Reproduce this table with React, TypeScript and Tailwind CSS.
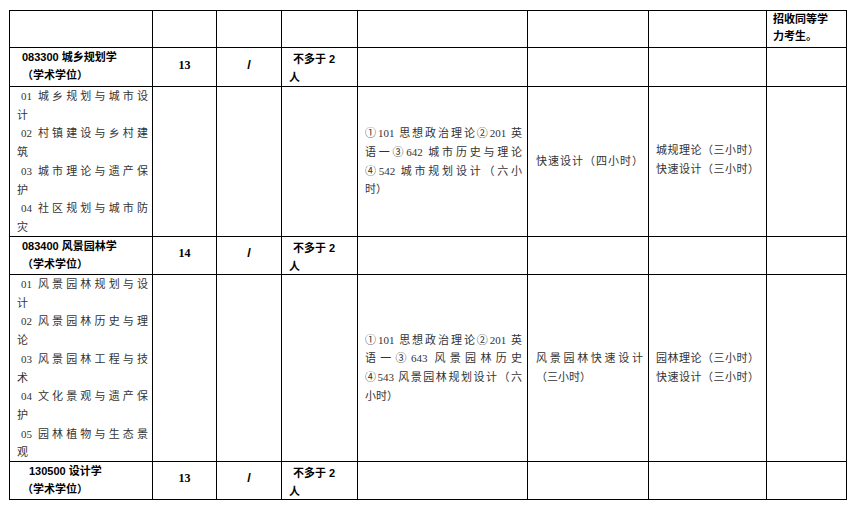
import type { ReactNode } from 'react'

const serif = "font-['Liberation_Serif','Noto_Sans_CJK_SC',serif] text-[11px] leading-[18.7px] text-[#333]"
const bold = "font-['Liberation_Sans','Noto_Sans_CJK_SC',sans-serif] font-bold text-[11px] text-black"
const just = 'text-justify [text-align-last:justify]'

function Cell({ className = '', children }: { className?: string; children?: ReactNode }) {
  return <div className={`border-r border-b border-black overflow-hidden ${className}`}>{children}</div>
}

// first line of each item is justified across the cell, the wrapped tail sits on the left
function Items({ items }: { items: [string, string][] }) {
  return (
    <div className={`${serif} pl-[7px] pr-[4px]`}>
      {items.map(([a, b]) => (
        <div key={a}>
          <div className={`${just} pl-[4px]`}>{a}</div>
          <div>{b}</div>
        </div>
      ))}
    </div>
  )
}

function Block({ lines, last, className = '' }: { lines: string[]; last?: string; className?: string }) {
  return (
    <div className={`${serif} h-full flex flex-col justify-center ${className}`}>
      {lines.map((l) => (
        <div key={l} className={`${just} whitespace-nowrap`}>{l}</div>
      ))}
      {last && <div>{last}</div>}
    </div>
  )
}

function MajorRow({ code, name, count, indent }: { code: string; name: string; count: string; indent?: boolean }) {
  return (
    <>
      <Cell className={`${bold} leading-[18px] pl-[12px]`}>
        <div className={indent ? 'pl-[7px]' : ''}>{code} {name}</div>
        <div>（学术学位）</div>
      </Cell>
      <Cell className="flex items-center justify-center pb-[5px]">
        <span className="font-['Liberation_Serif',serif] font-bold text-[12px] text-black">{count}</span>
      </Cell>
      <Cell className="flex items-center justify-center pb-[5px]">
        <span className="font-['Liberation_Sans',sans-serif] font-bold text-[13px] text-black">/</span>
      </Cell>
      <Cell className={`${bold} leading-[18px] pl-[7px] pt-[2px]`}>
        <div className="pl-[4px]">不多于 2</div>
        <div>人</div>
      </Cell>
      <Cell />
      <Cell />
      <Cell />
      <Cell />
    </>
  )
}

export default function App() {
  return (
    <div className="w-[859px] h-[509px] bg-white pt-[10px] pl-[9px]">
      <div className="grid grid-cols-[143px_64px_65px_76px_170px_121px_118px_80px] grid-rows-[37px_39px_150px_38px_187px_38px] w-[838px] border-l border-t border-black">
        {/* top leftover row */}
        <Cell />
        <Cell />
        <Cell />
        <Cell />
        <Cell />
        <Cell />
        <Cell />
        <Cell className={`${bold} leading-[17px] pl-[6px]`}>
          <div>招收同等学</div>
          <div>力考生。</div>
        </Cell>

        <MajorRow code="083300" name="城乡规划学" count="13" />
        <Cell>
          <Items
            items={[
              ['01 城乡规划与城市设', '计'],
              ['02 村镇建设与乡村建', '筑'],
              ['03 城市理论与遗产保', '护'],
              ['04 社区规划与城市防', '灾'],
            ]}
          />
        </Cell>
        <Cell />
        <Cell />
        <Cell />
        <Cell className="pl-[7px] pr-[5px]">
          <Block
            lines={['①101 思想政治理论②201 英', '语一③642  城市历史与理论', '④542  城市规划设计（六小']}
            last="时）"
          />
        </Cell>
        <Cell className="pl-[8px] pr-[5px]">
          <Block lines={['快速设计（四小时）']} />
        </Cell>
        <Cell className="pl-[7px] pr-[7px]">
          <Block lines={['城规理论（三小时）', '快速设计（三小时）']} className="pb-[3px]" />
        </Cell>
        <Cell />

        <MajorRow code="083400" name="风景园林学" count="14" />
        <Cell>
          <Items
            items={[
              ['01 风景园林规划与设', '计'],
              ['02 风景园林历史与理', '论'],
              ['03 风景园林工程与技', '术'],
              ['04 文化景观与遗产保', '护'],
              ['05 园林植物与生态景', '观'],
            ]}
          />
        </Cell>
        <Cell />
        <Cell />
        <Cell />
        <Cell className="pl-[7px] pr-[5px]">
          <Block
            lines={['①101 思想政治理论②201 英', '语一③643 风景园林历史', '④543 风景园林规划设计（六']}
            last="小时）"
          />
        </Cell>
        <Cell className="pl-[8px] pr-[5px]">
          <Block lines={['风景园林快速设计']} last="（三小时）" />
        </Cell>
        <Cell className="pl-[7px] pr-[7px]">
          <Block lines={['园林理论（三小时）', '快速设计（三小时）']} />
        </Cell>
        <Cell />

        <MajorRow code="130500" name="设计学" count="13" indent />
      </div>
    </div>
  )
}
